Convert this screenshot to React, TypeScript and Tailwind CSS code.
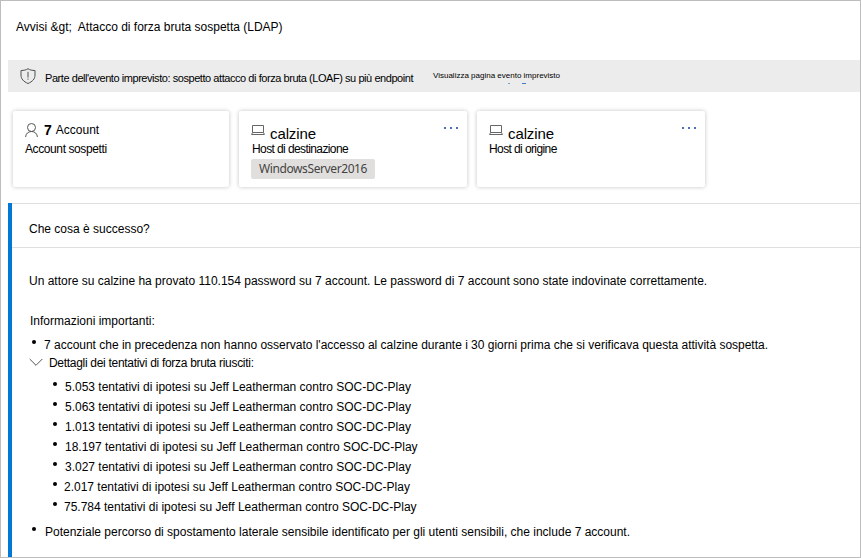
const attempts = [
  { text: "5.053 tentativi di ipotesi su Jeff Leatherman contro SOC-DC-Play", inset: "pl-2" },
  { text: "5.063 tentativi di ipotesi su Jeff Leatherman contro SOC-DC-Play", inset: "pl-2" },
  { text: "1.013 tentativi di ipotesi su Jeff Leatherman contro SOC-DC-Play", inset: "pl-2" },
  { text: "18.197 tentativi di ipotesi su Jeff Leatherman contro SOC-DC-Play", inset: "pl-2" },
  { text: "3.027 tentativi di ipotesi su Jeff Leatherman contro SOC-DC-Play", inset: "pl-2" },
  { text: "2.017 tentativi di ipotesi su Jeff Leatherman contro SOC-DC-Play", inset: "pl-[7px]" },
  { text: "75.784 tentativi di ipotesi su Jeff Leatherman contro SOC-DC-Play", inset: "pl-[7px]" },
];

function Bullet() {
  return <span className="mt-[5px] size-1 shrink-0 rounded-full bg-black" />;
}

function ShieldIcon() {
  return (
    <svg className="h-4 w-4 shrink-0" viewBox="0 0 16 16" fill="none" stroke="#505050" strokeWidth="1">
      <path d="M8 .7C6.4 2 3.6 2.5 1 2.5V7c0 4 2.500 6.500 7 8.500 4.500-2 7-4.500 7-8.500V2.500C12.400 2.500 9.600 2 8 .7Z" />
      <path d="M8 3.800v5.700M8 10.500v1.200" />
    </svg>
  );
}

function PersonIcon() {
  return (
    <svg className="h-[14px] w-[13px] shrink-0" viewBox="0 0 13 14" fill="none" stroke="#555" strokeWidth="1">
      <circle cx="6.500" cy="4.500" r="4" />
      <path d="M.6 14C.8 10.700 3.200 8.500 6.500 8.500s5.700 2.200 5.900 5.500" />
    </svg>
  );
}

function LaptopIcon() {
  return (
    <svg className="h-[11px] w-[14px] shrink-0" viewBox="0 0 14 11" fill="none" stroke="#666" strokeWidth="1">
      <path d="M1.500 7.500v-7h11v7" />
      <path d="M1.500 7.500h11l.9 2H.6Z" />
    </svg>
  );
}

function HostCard({ roleInset, role, tag }: { roleInset: string; role: string; tag?: string }) {
  return (
    <section className="ml-[10px] flex h-[76px] w-[228px] flex-col rounded-[2px] bg-white pl-3 shadow-[0_0_4px_rgba(0,0,0,0.24)]">
      <div className="flex h-[31px] items-start">
        <div className="mt-[14px]"><LaptopIcon /></div>
        <span className="ml-[5px] mt-[13px] text-[15px] leading-5 tracking-[-0.1px]">calzine</span>
        <div className="ml-auto mr-[9px] mt-4 flex gap-1">
          <span className="size-[2px] bg-[#4a70b8]" />
          <span className="size-[2px] bg-[#4a70b8]" />
          <span className="size-[2px] bg-[#4a70b8]" />
        </div>
      </div>
      <span className={`h-[17px] leading-[14px] tracking-[-0.6px] ${roleInset}`}>{role}</span>
      {tag && (
        <span className="flex h-5 w-[124px] items-center rounded-[2px] bg-[#e1dfdd] pl-2 font-['Noto_Sans',sans-serif] tracking-[-0.4px] text-[#444]">
          {tag}
        </span>
      )}
    </section>
  );
}

export default function App() {
  return (
    <main className="flex h-[558px] w-[861px] flex-col overflow-hidden whitespace-nowrap border border-[#bdbdbd] bg-white pl-[7px] font-['Liberation_Sans',Arial,sans-serif] text-[12px] text-black">
      <h1 className="mt-4 h-[43px] whitespace-pre pl-2 leading-5">{"Avvisi &gt;  Attacco di forza bruta sospetta (LDAP)"}</h1>
      <div className="flex h-8 shrink-0 items-center bg-[#ececec] pl-3">
        <ShieldIcon />
        <span className="ml-[9px] mt-1 w-[388px] text-[11px] tracking-[-0.44px]">
          Parte dell'evento imprevisto: sospetto attacco di forza bruta (LOAF) su più endpoint
        </span>
        <span className="relative text-[8px]">
          Visualizza pagina evento imprevisto
          <span className="absolute left-[75px] top-[13px] h-px w-[2px] bg-[#7aa0d0]" />
          <span className="absolute left-[89px] top-[13px] h-px w-1 bg-[#3f80c4]" />
        </span>
      </div>

      <div className="mt-[19px] flex shrink-0 pl-[5px]">
        <section className="h-[76px] w-[216px] rounded-[2px] bg-white pl-3 shadow-[0_0_4px_rgba(0,0,0,0.24)]">
          <div className="flex h-[30px] items-start pt-[11px]">
            <div className="mt-px"><PersonIcon /></div>
            <b className="ml-[6px] text-[14px] leading-4">7</b>
            <span className="ml-1 leading-4">Account</span>
          </div>
          <div className="leading-4 tracking-[-0.4px]">Account sospetti</div>
        </section>
        <HostCard roleInset="pl-px" role="Host di destinazione" tag="WindowsServer2016" />
        <HostCard roleInset="pl-0" role="Host di origine" />
      </div>

      <section className="mt-4 flex-1 border-l-4 border-[#0078d4]">
        <h2 className="h-[45px] border-y border-[#dedede] pl-[17px] pt-4 leading-[18px]">Che cosa è successo?</h2>
        <p className="mt-[23px] pl-[17px] leading-5">
          Un attore su calzine ha provato 110.154 password su 7 account. Le password di 7 account sono state indovinate correttamente.
        </p>
        <p className="mt-5 pl-[18px] leading-5">Informazioni importanti:</p>
        <ul className="mt-1 flex flex-col">
          <li className="flex h-[18px] pl-5 leading-5">
            <Bullet />
            <span className="pl-2 tracking-[-0.01px]">
              7 account che in precedenza non hanno osservato l'accesso al calzine durante i 30 giorni prima che si verificava questa attività sospetta.
            </span>
          </li>
          <li>
            <div className="flex h-6 pl-[17px] leading-5">
              <svg className="mt-[5px] h-[9px] w-[14px] shrink-0" viewBox="0 0 14 9" fill="none" stroke="#555">
                <path d="m.7 1 6.300 6.300L13.300 1" />
              </svg>
              <span className="pl-1.5 tracking-[-0.3px]">Dettagli dei tentativi di forza bruta riusciti:</span>
            </div>
            <ul className="pl-[41px]">
              {attempts.map((a) => (
                <li key={a.text} className="flex h-5 leading-5">
                  <Bullet />
                  <span className={a.inset}>{a.text}</span>
                </li>
              ))}
            </ul>
          </li>
          <li className="mt-[5px] flex pl-5 leading-5">
            <Bullet />
            <span className="pl-[9px]">
              Potenziale percorso di spostamento laterale sensibile identificato per gli utenti sensibili, che include 7 account.
            </span>
          </li>
        </ul>
      </section>
    </main>
  );
}
